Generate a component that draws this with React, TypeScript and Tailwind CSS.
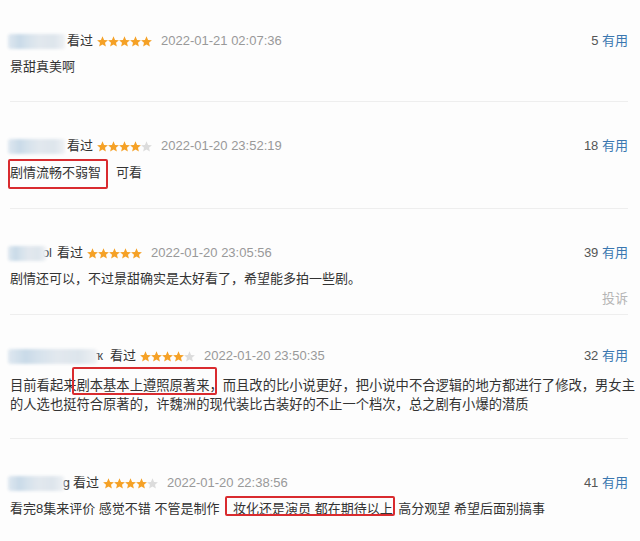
import React from "react";

const FONT = { fontFamily: '"Liberation Sans", "Noto Sans CJK SC", sans-serif' };

function Star({ on }: { on: boolean }) {
  return (
    <svg width="11" height="11" viewBox="1 1.2 22 21.2" className="shrink-0">
      <polygon
        points="12,1.5 15.1,8.6 22.8,9.3 17,14.4 18.7,22 12,18 5.3,22 7,14.4 1.2,9.3 8.9,8.6"
        fill={on ? "#f5a126" : "#dcdcdc"}
      />
    </svg>
  );
}

function Stars({ n }: { n: number }) {
  return (
    <span className="flex items-center">
      {[0, 1, 2, 3, 4].map((i) => (
        <Star key={i} on={i < n} />
      ))}
    </span>
  );
}

function Blur({ w, tail }: { w: number; tail?: string }) {
  return (
    <span className="relative flex items-center" style={{ width: w }}>
      {tail ? (
        <span className="absolute right-0 text-[13px] text-[#444]">{tail}</span>
      ) : null}
      <span
        className="relative h-[15px] rounded-[3px] blur-[1.5px]"
        style={{
          width: tail ? w - 6 : w,
          background:
            "linear-gradient(90deg,#dfe8f0 0%,#c9dae8 20%,#d6e2ec 35%,#e2e8ee 55%,#dde5ec 80%,#eef1f4 100%)",
        }}
      />
    </span>
  );
}

function Header({
  blur,
  tail,
  gap,
  n,
  date,
  count,
}: {
  blur: number;
  tail?: string;
  gap: number;
  n: number;
  date: string;
  count: string;
}) {
  return (
    <div className="flex h-[20px] items-center">
      <Blur w={blur} tail={tail} />
      <span className="text-[13px] text-[#333]" style={{ marginLeft: gap }}>
        看过
      </span>
      <span className="ml-[4px]">
        <Stars n={n} />
      </span>
      <span className="ml-[9px] text-[13px] text-[#999]">{date}</span>
      <span className="ml-auto text-[13px] text-[#555]">
        {count} <span className="text-[#3a77b0]">有用</span>
      </span>
    </div>
  );
}

function Box({ children, l, r, t, b }: { children: React.ReactNode; l: number; r: number; t: number; b: number }) {
  return (
    <span className="relative">
      {children}
      <span
        className="pointer-events-none absolute rounded-[2px] border-2 border-[#d92b2f]"
        style={{ left: -l, right: -r, top: -t, bottom: -b }}
      />
    </span>
  );
}

export default function App() {
  return (
    <div className="h-[541px] w-[640px] overflow-hidden bg-[#fdfdfd] pl-[10px] pr-[12px]" style={FONT}>
      {/* entry 1 */}
      <div className="border-b border-[#eeeeee] pt-[31px] pb-[24px]">
        <div className="-ml-[2px]">
          <Header blur={57} gap={2} n={5} date="2022-01-21 02:07:36" count="5" />
        </div>
        <p className="mt-[6px] h-[20px] text-[13px] leading-[20px] text-[#333]">景甜真美啊</p>
      </div>

      {/* entry 2 */}
      <div className="border-b border-[#eeeeee] pt-[34px] pb-[25px]">
        <div className="-ml-[2px]">
          <Header blur={57} gap={2} n={4} date="2022-01-20 23:52:19" count="18" />
        </div>
        <p className="mt-[7px] h-[20px] text-[13px] leading-[20px] text-[#333]">
          <Box l={2} r={7} t={6} b={9}>
            剧情流畅不弱智
          </Box>
          <span className="ml-[15px]">可看</span>
        </p>
      </div>

      {/* entry 3 */}
      <div className="border-b border-[#eeeeee] pt-[34px] pb-[5px]">
        <div className="-ml-[2px]">
          <Header blur={44} tail="ol" gap={5} n={5} date="2022-01-20 23:05:56" count="39" />
        </div>
        <p className="mt-[6px] h-[20px] text-[13px] leading-[20px] text-[#333]">
          剧情还可以，不过景甜确实是太好看了，希望能多拍一些剧。
        </p>
        <div className="flex h-[20px] justify-end text-[13px] leading-[20px] text-[#b5b5b5]">投诉</div>
      </div>

      {/* entry 4 */}
      <div className="border-b border-[#eeeeee] pt-[31px] pb-[24px]">
        <div className="-ml-[2px]">
          <Header blur={95} tail="ҡ" gap={7} n={4} date="2022-01-20 23:50:35" count="32" />
        </div>
        <p className="mt-[10px] whitespace-nowrap text-[13.3px] leading-[19px] text-[#333]">
          目前看起来
          <Box l={4} r={-6} t={11} b={2}>
            剧本基本上遵照原著来，
          </Box>
          而且改的比小说更好，把小说中不合逻辑的地方都进行了修改，男女主
          <br />
          的人选也挺符合原著的，许魏洲的现代装比古装好的不止一个档次，总之剧有小爆的潜质
        </p>
      </div>

      {/* entry 5 */}
      <div className="pt-[34px]">
        <div className="-ml-[2px]">
          <Header blur={62} tail="g" gap={3} n={4} date="2022-01-20 22:38:56" count="41" />
        </div>
        <p className="mt-[6px] h-[20px] whitespace-nowrap text-[13px] leading-[20px] text-[#333]">
          看完8集来评价 感觉不错 不管是制作{" "}
          <span className="ml-[10px]">
            <Box l={8} r={2} t={5} b={0}>
              妆化还是演员 都在期待以上
            </Box>
          </span>{" "}
          <span className="ml-[2px]">高分观望 希望后面别搞事</span>
        </p>
      </div>
    </div>
  );
}
